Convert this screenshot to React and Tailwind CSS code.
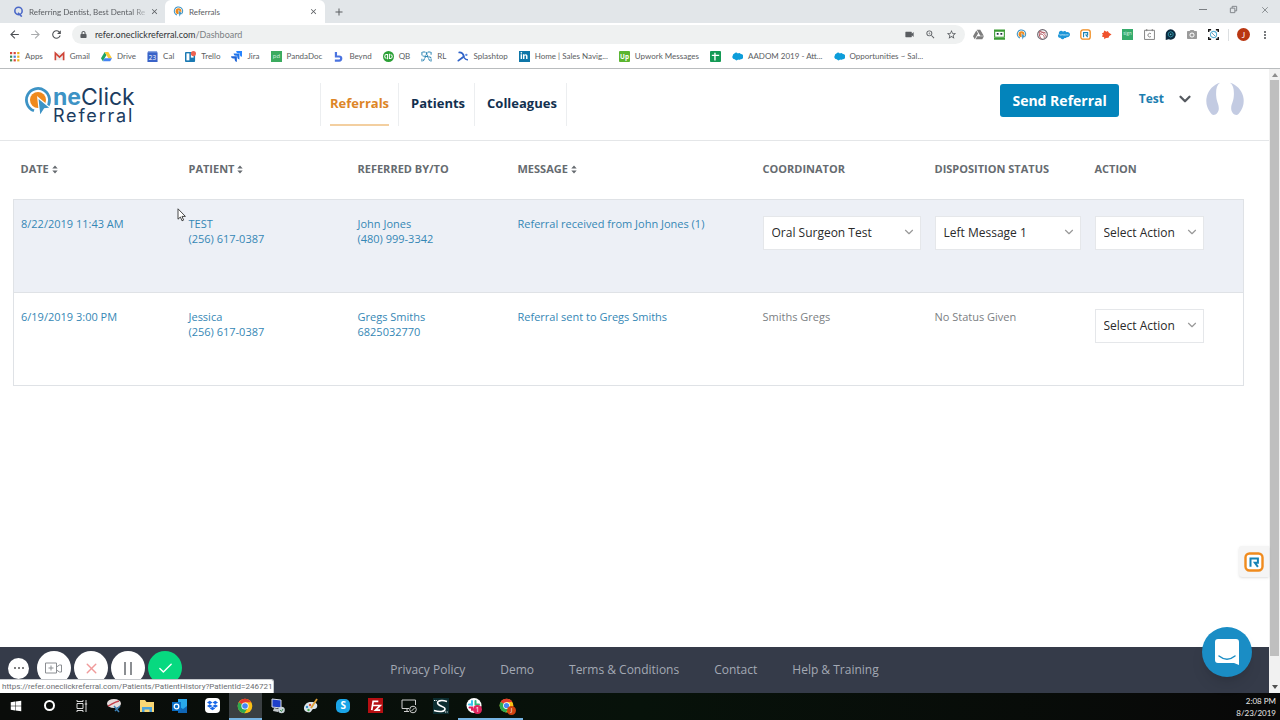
import React, { useState } from 'react';
import { FaDropbox, FaLinkedinIn, FaSalesforce, FaSkype, FaWindows, FaLock, FaGoogleDrive } from 'react-icons/fa';
import { MdArrowBack, MdArrowForward, MdRefresh, MdVideocam, MdStarBorder, MdMoreVert, MdClose, MdZoomIn, MdAdd, MdPhotoCamera } from 'react-icons/md';
import { ChevronDown, X, Check } from 'lucide-react';

// ================= SMALL LOGOS =================

function ClickLogo({ className }) {
  return (
    <svg viewBox="0 0 28 30" className={className}>
      <path d="M10 24.800A11.500 11.500 0 1 1 22.500 21.700" fill="none" stroke="#3d93c5" strokeWidth="2.800" />
      <circle cx="14" cy="14" r="8" fill="#ef8a1d" />
      <path d="M13.800 11.500 26.500 22l-6 .8L15.800 30z" fill="#3d93c5" stroke="#fff" strokeWidth="1.200" />
    </svg>
  );
}

function ChromeLogo({ className }) {
  return (
    <svg viewBox="0 0 24 24" className={className}>
      <circle cx="12" cy="12" r="11" fill="#fbc116" />
      <path d="M12 12 2.5 6.5A11 11 0 0 1 21.5 6.5H12z" fill="#e33b2e" />
      <path d="M2.5 6.5A11 11 0 0 0 11 23l5.5-8.5L12 12z" fill="#2da94f" />
      <circle cx="12" cy="12" r="5.4" fill="#fff" />
      <circle cx="12" cy="12" r="4.2" fill="#4486f4" />
    </svg>
  );
}

function RLogo({ className }) {
  return (
    <svg viewBox="0 0 20 20" className={className}>
      <rect x="1.5" y="1.5" width="17" height="17" rx="4" fill="#fff" stroke="#f08b1d" strokeWidth="2.4" />
      <path d="M6.500 14.800V6.600h7.400v4.200h-3l3 4" fill="none" stroke="#1783b5" strokeWidth="2" />
    </svg>
  );
}

function AppsLogo({ className }) {
  return (
    <svg viewBox="0 0 11 11" className={className}>
      {['#d9453a', '#d9453a', '#e8b21d', '#3b8b4f', '#4b7bd8', '#e8b21d', '#3b8b4f', '#d9453a', '#e8b21d'].map((c, i) => (
        <rect key={i} x={1 + (i % 3) * 3.6} y={1 + Math.floor(i / 3) * 3.6} width="2.2" height="2.2" fill={c} />
      ))}
    </svg>
  );
}

function GmailLogo({ className }) {
  return (
    <svg viewBox="0 0 12 12" className={className}>
      <rect x="1" y="2" width="10" height="8" fill="#eeeeee" />
      <path d="M1.5 10.2V2.4L6 6.6l4.5-4.2v7.8" fill="none" stroke="#cf4336" strokeWidth="1.8" />
    </svg>
  );
}

function DriveLogo({ className }) {
  return (
    <svg viewBox="0 0 12 12" className={className}>
      <path d="M4 1 0 8l2 3.2L6 4.4z" fill="#1fa463" />
      <path d="M4 1h4l4 7H8z" fill="#fcc934" />
      <path d="M4 8h8l-2 3.2H2z" fill="#4485f3" />
    </svg>
  );
}

function CalLogo({ className }) {
  return (
    <svg viewBox="0 0 12 12" className={className}>
      <rect x="1" width="10" height="3" fill="#8ba6e2" />
      <rect x=".5" y="1.5" width="11" height="10.5" fill="#3a63c8" />
      <text x="6" y="9.6" textAnchor="middle" fontSize="7" fill="#fff" fontFamily="Open Sans, sans-serif">23</text>
    </svg>
  );
}

function TrelloLogo({ className }) {
  return (
    <svg viewBox="0 0 12 12" className={className}>
      <rect y="1" width="11" height="11" rx="1" fill="#1a79b3" />
      <rect x="1.6" y="2.6" width="3.2" height="7.6" fill="#fff" />
      <rect x="6.4" y="2.6" width="3" height="4.6" fill="#fff" />
      <circle cx="9.2" cy="2.8" r="2.8" fill="#ec6251" />
    </svg>
  );
}

function JiraLogo({ className }) {
  return (
    <svg viewBox="0 0 12 12" className={className}>
      <path d="M5.6 0H12v6.4A2.6 2.6 0 0 1 9.6 4V2.5H8A2.6 2.6 0 0 1 5.6 0z" fill="#2684ff" />
      <path d="M2.8 2.8h6.4v6.4a2.6 2.6 0 0 1-2.4-2.4V5.3H5.2a2.6 2.6 0 0 1-2.4-2.5z" fill="#2074ea" />
      <path d="M0 5.6h6.4V12A2.6 2.6 0 0 1 4 9.6V8.1H2.4A2.6 2.6 0 0 1 0 5.6z" fill="#2065d6" />
    </svg>
  );
}

function PandaLogo({ className }) {
  return (
    <svg viewBox="0 0 12 12" className={className}>
      <rect width="12" height="12" fill="#3bab5f" />
      <text x="6" y="8" textAnchor="middle" fontSize="6.5" fill="#d8f2e0" fontFamily="Open Sans, sans-serif">pd</text>
    </svg>
  );
}

function BeyndLogo({ className }) {
  return (
    <svg viewBox="0 0 12 12" className={className}>
      <path d="M2 1h2.4v3.8h2.4a3.3 3.3 0 0 1 0 6.8H2V9.4h4.6a1.2 1.2 0 0 0 0-2.4H2z" fill="#4a73e0" />
    </svg>
  );
}

function QbLogo({ className }) {
  return (
    <svg viewBox="0 0 12 12" className={className}>
      <circle cx="6" cy="6" r="6" fill="#2ba036" />
      <path d="M5 9V3.9H3.9a2 2 0 0 0 0 4M7 3v5.1h1.1a2 2 0 0 0 0-4" fill="none" stroke="#fff" strokeWidth="1.1" />
    </svg>
  );
}

function RlLogo({ className }) {
  return (
    <svg viewBox="0 0 12 12" className={className}>
      <path d="M1 4V1h3c4 0 3 10 7 10V8c0-3-10-1-10-4zM11 4V1H8C5 1 5 11 1 11V8" fill="none" stroke="#2f86b4" strokeWidth="1.1" strokeDasharray="3 .6" />
    </svg>
  );
}

function SplashtopLogo({ className }) {
  return (
    <svg viewBox="0 0 12 12" className={className}>
      <path d="M2.5 1.5c3 0 4.5 2 5 4.5l-6 4.5" fill="none" stroke="#2f63c9" strokeWidth="2" strokeLinecap="round" />
      <circle cx="10.2" cy="4.2" r="1.3" fill="#5d8be0" />
      <path d="M8 7.4c1 1.6 2 2 3.4 2.2" fill="none" stroke="#2f63c9" strokeWidth="1.6" strokeLinecap="round" />
    </svg>
  );
}

function LinkedinLogo({ className }) {
  return (
    <span className={`${className} flex items-center justify-center bg-[#0e76a8]`}>
      <FaLinkedinIn size={8} className="text-white" />
    </span>
  );
}

function UpworkLogo({ className }) {
  return (
    <svg viewBox="0 0 12 12" className={className}>
      <rect width="12" height="12" rx="1" fill="#5bb52f" />
      <text x="6" y="8.2" textAnchor="middle" fontSize="7" fontWeight="700" fill="#fff" fontFamily="Open Sans, sans-serif">Up</text>
    </svg>
  );
}

function SheetLogo({ className }) {
  return (
    <svg viewBox="0 0 12 12" className={className}>
      <rect width="12" height="12" rx="1" fill="#149a55" />
      <path d="M2 4.8h8M5.4 2v8.4" stroke="#fff" strokeWidth="1.5" />
    </svg>
  );
}

function CloudLogo({ className }) {
  return (
    <svg viewBox="0 0 12 12" className={className}>
      <path d="M2.600 2.800a2.600 2.600 0 0 1 3.800-.2 2.400 2.400 0 0 1 3.200.8A2.800 2.800 0 0 1 9.400 9a2.600 2.600 0 0 1-2.600.4 2.600 2.600 0 0 1-3.800-.4A2.500 2.500 0 0 1 .9 5a2.300 2.300 0 0 1 1.700-2.200z" fill="#0d9dda" />
    </svg>
  );
}

function QTabLogo({ className }) {
  return (
    <svg viewBox="0 0 12 12" className={className}>
      <circle cx="6" cy="5.4" r="4" fill="none" stroke="#4b68c8" strokeWidth="1.7" />
      <path d="M5.4 7.4 9.6 11.6" stroke="#4b68c8" strokeWidth="1.7" />
    </svg>
  );
}

// ================= BROWSER =================

const BOOKMARKS = [
  { name: 'Apps', Icon: AppsLogo },
  { name: 'Gmail', Icon: GmailLogo },
  { name: 'Drive', Icon: DriveLogo },
  { name: 'Cal', Icon: CalLogo },
  { name: 'Trello', Icon: TrelloLogo },
  { name: 'Jira', Icon: JiraLogo },
  { name: 'PandaDoc', Icon: PandaLogo },
  { name: 'Beynd', Icon: BeyndLogo },
  { name: 'QB', Icon: QbLogo },
  { name: 'RL', Icon: RlLogo },
  { name: 'Splashtop', Icon: SplashtopLogo },
  { name: 'Home | Sales Navig...', Icon: LinkedinLogo },
  { name: 'Upwork Messages', Icon: UpworkLogo },
  { name: '', label: 'Sheets', Icon: SheetLogo },
  { name: 'AADOM 2019 - Att...', Icon: CloudLogo },
  { name: 'Opportunities ~ Sal...', Icon: CloudLogo },
];

const EXTENSIONS = [
  { name: 'Drive', icon: <FaGoogleDrive size={11} className="text-[#7d7d7d]" /> },
  {
    name: 'RoboForm',
    icon: (
      <svg viewBox="0 0 12 12" className="size-[11px]">
        <path d="M0 1.4h12M0 10.8h12" stroke="#3b9b35" strokeWidth="1.8" />
        <rect x=".7" y="2.4" width="10.6" height="6.6" fill="#fff" stroke="#3b9b35" strokeWidth="1.2" />
        <path d="M3 5.4h2M7 5.4h2" stroke="#234" strokeWidth="2" />
      </svg>
    ),
  },
  { name: 'OneClick', icon: <ClickLogo className="size-[11px]" /> },
  {
    name: 'Loom',
    icon: (
      <svg viewBox="0 0 12 12" className="size-[11px]">
        <circle cx="6" cy="6" r="5.3" fill="none" stroke="#6d6770" strokeWidth="1.2" />
        <path d="M2 3.500c3-2 6 1 8 5M2.500 8c1-5 5-5 7-3.500M5 10.600C2 8 2 4 4 2M4 6c2-1 4 1 4 4" fill="none" stroke="#b0525c" strokeWidth="1" />
      </svg>
    ),
  },
  { name: 'Salesforce', icon: <FaSalesforce size={12} className="text-[#1c96d8]" /> },
  { name: 'Referral', icon: <RLogo className="size-[11px]" /> },
  {
    name: 'Splat',
    icon: (
      <svg viewBox="0 0 12 12" className="size-[11px]">
        <path d="M1 4.500 2.800 4.200l.8-2.600L6 3l1.400-.8 1.200 1.800L11.500 6 9 7.600 8.200 9.600l-2.800.2-1.800 1.400-.2-2.200L1 8.200 2 6.400z" fill="#f0532d" />
      </svg>
    ),
  },
  {
    name: 'Sign',
    icon: (
      <svg viewBox="0 0 12 12" className="size-[11px]">
        <rect width="12" height="12" fill="#35ab6c" />
        <text x="6" y="6.4" textAnchor="middle" fontSize="5" fill="#d6f3e2" fontFamily="Open Sans, sans-serif">sign</text>
      </svg>
    ),
  },
  {
    name: 'Calendar',
    icon: (
      <svg viewBox="0 0 12 12" className="size-[11px]">
        <path d="M.6 1.4h10.8v10H.6zM3 0v2.4M9 0v2.4" fill="none" stroke="#7c7c7c" strokeWidth="1" />
        <path d="M7.6 5.2a2 2 0 1 0 0 3" fill="none" stroke="#7c7c7c" strokeWidth="1" />
      </svg>
    ),
  },
  {
    name: 'Ghost',
    icon: (
      <svg viewBox="0 0 12 12" className="size-[11px]">
        <path d="M6 .4a5.6 5.6 0 1 1-2 10.8L.8 12V6A5.4 5.4 0 0 1 6 .4z" fill="#0c2b40" />
        <path d="m6.2 2.8 2.6 1.5v3L6.2 8.8 3.6 7.3v-3z" fill="none" stroke="#2f95a8" strokeWidth="1" />
        <circle cx="6.2" cy="5.8" r=".9" fill="#5cc3cf" />
      </svg>
    ),
  },
  { name: 'Camera', icon: <MdPhotoCamera size={12} className="text-[#9b9b9b]" /> },
  {
    name: 'Scan',
    icon: (
      <svg viewBox="0 0 12 12" className="size-[11px]">
        <path d="M.8 3.4V.8h2.6M8.6.8h2.6v2.6M11.2 8.6v2.6H8.6M3.4 11.2H.8V8.6" fill="none" stroke="#111" strokeWidth="1.5" />
        <circle cx="6" cy="6" r="3.4" fill="none" stroke="#5cb4d8" strokeWidth="1.2" />
        <path d="m4 4 4 4" stroke="#6f93a8" strokeWidth="1" />
      </svg>
    ),
  },
];

function BrowserTop() {
  return (
    <div className="shrink-0 border-b border-[#b9bcbe] bg-white font-['Lato','Open_Sans',sans-serif] text-[#5a5d61]">
      {/* Tabs */}
      <div className="flex h-[23px] items-stretch bg-[#e2e6e9] text-[8px]">
        <div className="flex w-[165px] items-center pr-[6px] pl-[13px]">
          <QTabLogo className="size-[11px] shrink-0" />
          <span className="ml-[5px] flex-1 mask-r-from-85% whitespace-nowrap">Referring Dentist, Best Dental Re</span>
          <button type="button" aria-label="Close tab"><MdClose size={9} /></button>
        </div>
        <div className="flex w-[160px] items-center rounded-t-md bg-white pr-[7px] pl-2">
          <ClickLogo className="size-[11px] shrink-0" />
          <span className="ml-[5px] flex-1">Referrals</span>
          <button type="button" aria-label="Close tab"><MdClose size={9} /></button>
        </div>
        <button type="button" aria-label="New tab" className="px-2"><MdAdd size={12} /></button>
        <div className="ml-auto flex items-center gap-[22px] pr-[10px] pb-1 text-[#7b7f83]">
          <button type="button" aria-label="Minimize" className="h-px w-2 bg-current" />
          <button type="button" aria-label="Restore">
            <svg viewBox="0 0 10 10" className="size-[9px]"><path d="M1.5 3.5h5v5h-5zM3.5 3.5v-2h5v5h-2" fill="none" stroke="currentColor" /></svg>
          </button>
          <button type="button" aria-label="Close"><X size={10} strokeWidth={2} /></button>
        </div>
      </div>

      {/* Address bar */}
      <div className="flex h-[23px] items-center pl-2">
        <div className="flex gap-2 pr-[9px]">
          <button type="button" aria-label="Back" className="text-[#4d5054]"><MdArrowBack size={13} /></button>
          <button type="button" aria-label="Forward" className="text-[#a9abad]"><MdArrowForward size={13} /></button>
          <button type="button" aria-label="Reload" className="text-[#4d5054]"><MdRefresh size={13} /></button>
        </div>
        <div className="flex h-[19px] flex-1 items-center rounded-full bg-[#eff1f1] px-2 text-[9px]">
          <FaLock size={7} className="text-[#5a5d61]" />
          <div className="ml-2 flex-1">
            <span className="text-[#303336]">refer.oneclickreferral.com</span><span className="text-[#7b7f83]">/Dashboard</span>
          </div>
          <div className="flex gap-[10px]">
            <MdVideocam size={11} />
            <MdZoomIn size={11} />
            <MdStarBorder size={11} />
          </div>
        </div>
        <div className="flex items-center pl-[3px]">
          <div className="flex w-[256px]">
            {EXTENSIONS.map(ext => (
              <button key={ext.name} type="button" aria-label={ext.name} className="flex flex-1 justify-center">{ext.icon}</button>
            ))}
          </div>
          <span className="ml-1 h-3 w-px bg-[#dcdfe1]" />
          <span className="ml-2 flex size-[13px] items-center justify-center rounded-full bg-[#b93712] text-[8px] text-white">J</span>
          <button type="button" aria-label="Menu" className="mx-[9px]"><MdMoreVert size={12} /></button>
        </div>
      </div>

      {/* Bookmarks */}
      <div className="flex h-[22px] items-center gap-[11px] pb-[2px] pl-[9px] text-[8px] whitespace-nowrap">
        {BOOKMARKS.map(({ name, label, Icon }) => (
          <a key={name || label} href="#" aria-label={label} className="flex items-center gap-[5px]">
            <Icon className="size-[11px] shrink-0" />
            {name}
          </a>
        ))}
      </div>
    </div>
  );
}

// ================= PAGE =================

function Header() {
  return (
    <header className="flex h-[72px] shrink-0 items-center border-b border-[#e4e6e8] pr-[25px] pl-6">
      <a href="#" className="flex w-[296px] items-start text-[#1b3c5f]">
        <ClickLogo className="h-[30px] w-[28px]" />
        <span className="ml-px flex flex-col font-['Inter']">
          <span className="text-[23px] leading-[22px]"><b className="text-[#3d93c5]">ne</b>Click</span>
          <span className="text-[18px] leading-4 tracking-widest">Referral</span>
        </span>
      </a>
      <nav className="flex border-l border-[#eceef0] text-[13px] font-bold text-[#12304f]">
        <a href="#" className="border-r border-[#eceef0] px-[9px] text-[#dd8527]">
          <span className="block border-b-2 border-[#f3cfa0] pt-[10px] pb-[11px] leading-5">Referrals</span>
        </a>
        <a href="#" className="border-r border-[#eceef0] pt-[10px] pr-[9px] pl-3 leading-5">Patients</a>
        <a href="#" className="border-r border-[#eceef0] pt-[10px] pr-[9px] pl-3 leading-5">Colleagues</a>
      </nav>
      <div className="ml-auto flex items-center pb-2">
        <button type="button" className="h-[33px] rounded-[3px] bg-[#0384bb] px-3 text-[14px] font-bold text-white">Send Referral</button>
        <button type="button" className="ml-5 flex items-center gap-3 pb-1 text-[12px] font-bold text-[#1c7eb0]">
          Test
          <ChevronDown size={18} strokeWidth={3} className="text-[#555a60]" />
        </button>
        <svg viewBox="0 0 38 38" className="ml-3 size-[38px]">
          <path d="M14 .7A19 19 0 0 0 6 32.500C9 34 12.500 31 12.800 27 13 22 10.500 20 10.200 14 9.800 8 10.500 3 14 .7zM24 .7A19 19 0 0 1 32 32.500C29 34 25.500 31 25.200 27 25 22 27.500 20 27.800 14 28.200 8 27.500 3 24 .7z" fill="#c3cbe2" />
        </svg>
      </div>
    </header>
  );
}

function SortIcon() {
  return (
    <svg viewBox="0 0 6 10" className="mb-[2px] ml-[3px] inline-block h-[9px] w-[6px]">
      <path d="M0 4 3 .6 6 4zM0 6l3 3.400L6 6z" fill="#666b70" />
    </svg>
  );
}

function Dropdown({ label, value, options, className }) {
  const [selected, setSelected] = useState(value);
  return (
    <div className={`relative ${className}`}>
      <select
        aria-label={label}
        value={selected}
        onChange={(e) => setSelected(e.target.value)}
        className="h-[34px] w-full appearance-none border border-[#e5e7ea] bg-white pl-2 text-[12px] text-[#2a2a2a] outline-none"
      >
        {options.map(o => <option key={o}>{o}</option>)}
      </select>
      <ChevronDown size={14} className="pointer-events-none absolute top-[9px] right-[5px] text-[#999]" />
    </div>
  );
}

const COLUMNS = [
  { title: 'DATE', sort: true },
  { title: 'PATIENT', sort: true },
  { title: 'REFERRED BY/TO' },
  { title: 'MESSAGE', sort: true },
  { title: 'COORDINATOR' },
  { title: 'DISPOSITION STATUS' },
  { title: 'ACTION' },
];

const REFERRALS = [
  {
    date: '8/22/2019 11:43 AM',
    patient: ['TEST', '(256) 617-0387'],
    referred: ['John Jones', '(480) 999-3342'],
    message: 'Referral received from John Jones (1)',
    coordinator: 'Oral Surgeon Test',
    status: 'Left Message 1',
    editable: true,
  },
  {
    date: '6/19/2019 3:00 PM',
    patient: ['Jessica', '(256) 617-0387'],
    referred: ['Gregs Smiths', '6825032770'],
    message: 'Referral sent to Gregs Smiths',
    coordinator: 'Smiths Gregs',
    status: 'No Status Given',
    editable: false,
  },
];

function ReferralTable() {
  return (
    <div className="pr-[26px] pl-[13px]">
      <table className="w-full table-fixed border-collapse text-[11px] leading-[15px]">
        <colgroup>
          <col className="w-[168px]" />
          <col className="w-[169px]" />
          <col className="w-[160px]" />
          <col className="w-[245px]" />
          <col className="w-[172px]" />
          <col className="w-[160px]" />
          <col className="w-[156px]" />
        </colgroup>
        <thead>
          <tr className="h-[58px] text-left text-[#666b70]">
            {COLUMNS.map(c => (
              <th key={c.title} className="pb-[2px] pl-[7px] font-bold whitespace-nowrap">
                {c.title}
                {c.sort && <SortIcon />}
              </th>
            ))}
          </tr>
        </thead>
        <tbody>
          {REFERRALS.map(r => (
            <tr key={r.date} className={`h-[93px] border border-[#dfe2e6] align-top text-[#3587b5] ${r.editable ? 'bg-[#edf0f6]' : 'bg-white'}`}>
              <td className="pt-4 pl-[7px]"><a href="#">{r.date}</a></td>
              <td className="pt-4 pl-[7px]"><a href="#">{r.patient[0]}<br />{r.patient[1]}</a></td>
              <td className="pt-4 pl-[7px]"><a href="#">{r.referred[0]}<br />{r.referred[1]}</a></td>
              <td className="pt-4 pl-[7px]"><a href="#">{r.message}</a></td>
              <td className="pt-4 pl-[7px] text-[#7b8083]">
                {r.editable
                  ? <Dropdown label="Coordinator" value={r.coordinator} options={[r.coordinator]} className="w-[158px]" />
                  : r.coordinator}
              </td>
              <td className="pt-4 pl-[7px] text-[#7b8083]">
                {r.editable
                  ? <Dropdown label="Disposition status" value={r.status} options={[r.status]} className="w-[146px]" />
                  : r.status}
              </td>
              <td className="pt-4 pl-[7px]">
                <Dropdown label="Action" value="Select Action" options={['Select Action']} className="w-[109px]" />
              </td>
            </tr>
          ))}
        </tbody>
      </table>
    </div>
  );
}

function Footer() {
  return (
    <footer className="flex h-[46px] shrink-0 items-center justify-center gap-[35px] bg-[#353b49] text-[12px] text-[#a3a9b4]">
      {['Privacy Policy', 'Demo', 'Terms & Conditions', 'Contact', 'Help & Training'].map(t => (
        <a key={t} href="#">{t}</a>
      ))}
    </footer>
  );
}

function Scrollbar() {
  return (
    <div className="flex w-[11px] shrink-0 flex-col items-center bg-[#f1f1f1] py-1">
      <svg viewBox="0 0 6 4" className="h-1 w-[6px]"><path d="M0 4 3 0l3 4z" fill="#8d8d8d" /></svg>
      <div className="mt-[3px] w-[9px] grow-[20] bg-[#bfbfbf]" />
      <div className="grow" />
      <svg viewBox="0 0 6 4" className="h-1 w-[6px]"><path d="M0 0h6L3 4z" fill="#505050" /></svg>
    </div>
  );
}

// Screen recorder controls, bottom left of the page
function RecorderControls() {
  return (
    <div className="absolute bottom-2 left-2 flex items-center">
      <button type="button" aria-label="More" className="mr-2 flex size-[21px] items-center justify-center gap-[2px] rounded-full bg-white">
        <span className="size-[2px] rounded-full bg-[#555]" />
        <span className="size-[2px] rounded-full bg-[#555]" />
        <span className="size-[2px] rounded-full bg-[#555]" />
      </button>
      <div className="flex gap-[3px]">
        <button type="button" aria-label="Camera" className="flex size-[34px] items-center justify-center rounded-full bg-white">
          <svg viewBox="0 0 18 12" className="h-3 w-[18px]" fill="none" stroke="#8b8e92">
            <path d="M.5 1h11v10H.5zM11.500 5l3-2h2v7h-2l-3-2M6 3.500v5M3.500 6h5" />
          </svg>
        </button>
        <button type="button" aria-label="Cancel" className="flex size-[34px] items-center justify-center rounded-full bg-white">
          <X size={17} strokeWidth={2} className="text-[#f09a9a]" />
        </button>
        <button type="button" aria-label="Pause" className="flex size-[34px] items-center justify-center gap-1 rounded-full bg-white">
          <span className="h-[13px] w-[2px] bg-[#8b8e92]" />
          <span className="h-[13px] w-[2px] bg-[#8b8e92]" />
        </button>
        <button type="button" aria-label="Finish" className="flex size-[34px] items-center justify-center rounded-full bg-[#07d980]">
          <Check size={17} strokeWidth={2} className="text-white" />
        </button>
      </div>
    </div>
  );
}

function Overlays() {
  return (
    <>
      <RecorderControls />
      <div className="absolute bottom-0 left-0 rounded-tr-[3px] border-t border-r border-[#c5c8cc] bg-white pr-px pl-[2px] font-['Roboto'] text-[8px] leading-[13px] text-[#6b6e72]">
        https://refer.oneclickreferral.com/Patients/PatientHistory?PatientId=246721
      </div>
      <button type="button" aria-label="Open widget" className="absolute right-0 bottom-[116px] flex h-[31px] w-[30px] items-center justify-center rounded-l-[3px] bg-[#f5f5f5] shadow">
        <RLogo className="size-5" />
      </button>
      <button type="button" aria-label="Chat" className="absolute right-[17px] bottom-4 flex size-[50px] items-center justify-center rounded-full bg-[#1a8dc5] shadow-lg">
        <svg viewBox="0 0 26 28" className="h-7 w-[26px]">
          <path d="M4 1h18a3 3 0 0 1 3 3v23l-5-2H4a3 3 0 0 1-3-3V4a3 3 0 0 1 3-3z" fill="#fff" />
          <path d="M5 18c5 4 11 4 16 0" fill="none" stroke="#1a8dc5" strokeWidth="1.500" strokeLinecap="round" />
        </svg>
      </button>
      <svg viewBox="0 0 10 14" className="absolute top-[139px] left-[177px] h-[14px] w-[10px]">
        <path d="M1 .8v10.400l2.400-2.200 1.600 3.800 1.600-.7L5 8.400h3.400z" fill="#fff" stroke="#333" strokeWidth=".9" />
      </svg>
    </>
  );
}

// ================= TASKBAR =================

const TASKS = [
  { name: 'Start', icon: <FaWindows size={12} className="text-white" /> },
  { name: 'Cortana', icon: <span className="size-[11px] rounded-full border-2 border-white" /> },
  {
    name: 'Task view',
    icon: (
      <svg viewBox="0 0 12 12" className="size-3" fill="none" stroke="#dcdcdc">
        <path d="M1 3.500h6v5H1zM1 0v1.500h6V0M1 12v-1.500h6V12M10 0v12M8.800 4h2.400" />
      </svg>
    ),
  },
  {
    name: 'Snip',
    icon: (
      <svg viewBox="0 0 16 16" className="size-4">
        <ellipse cx="8" cy="5.500" rx="7" ry="4.500" fill="#e6dede" />
        <path d="M2 8c3-1 6-4 11-5" stroke="#c4404c" strokeWidth="1.500" fill="none" />
        <path d="m8 8 5 6M14 8l-5 5" stroke="#3e83b8" strokeWidth="1.500" />
      </svg>
    ),
  },
  {
    name: 'Explorer',
    icon: (
      <svg viewBox="0 0 16 14" className="h-[14px] w-4">
        <path d="M1 1h5l1.500 2H15v10H1z" fill="#f8d775" />
        <path d="M3 13V8h10v5h-2.500v-2.500h-5V13z" fill="#4aa3dc" />
      </svg>
    ),
  },
  {
    name: 'Outlook',
    icon: (
      <svg viewBox="0 0 16 16" className="size-4">
        <rect x="6" y="1" width="9" height="14" fill="#28a8ea" />
        <path d="m6 8 5 3 4-3v7H6z" fill="#1066b5" />
        <rect y="4" width="9" height="9" fill="#0a6ec4" />
        <circle cx="4.500" cy="8.500" r="2.300" fill="none" stroke="#fff" strokeWidth="1.300" />
      </svg>
    ),
  },
  {
    name: 'Dropbox',
    icon: <span className="flex size-[15px] items-center justify-center rounded-sm bg-white"><FaDropbox size={11} className="text-[#1767e8]" /></span>,
  },
  { name: 'Chrome', icon: <ChromeLogo className="size-4" />, active: true },
  {
    name: 'Remote',
    icon: (
      <svg viewBox="0 0 16 16" className="size-4">
        <path d="m2 1 9 1v8l-9-1z" fill="#1f3fc9" stroke="#d8dde4" />
        <path d="m4 10 5 1-1 3-5-1z" fill="#c4c8cc" />
        <circle cx="11.500" cy="12" r="3.300" fill="#c9d3d9" />
        <path d="m10 12 1.500 1.500L13 11" stroke="#3d8e4e" fill="none" />
      </svg>
    ),
  },
  {
    name: 'Paint',
    icon: (
      <svg viewBox="0 0 16 16" className="size-4">
        <path d="M8 4c5 0 7 2 6 5s-4 1-5 3-2 3-5 2-4-4-2-7 4-3 6-3z" fill="#dbe4ea" />
        <circle cx="4" cy="9" r="1.200" fill="#3d8ec9" />
        <circle cx="7" cy="7" r="1.200" fill="#d8503b" />
        <circle cx="5.500" cy="12" r="1.200" fill="#48a84f" />
        <path d="M8 10 14 1" stroke="#e0a13a" strokeWidth="1.800" />
      </svg>
    ),
  },
  {
    name: 'Skype',
    icon: (
      <span className="flex size-[14px] items-center justify-center rounded-[5px] bg-[#1aa5e8] text-[10px] font-bold text-white">S</span>
    ),
  },
  {
    name: 'FileZilla',
    icon: (
      <svg viewBox="0 0 16 16" className="size-[15px]">
        <rect width="16" height="16" fill="#b50f12" />
        <path d="M4 13 5.500 3.500H11M4.800 8H9M8.500 8h4.500l-5 5h5" fill="none" stroke="#fff" strokeWidth="1.800" />
      </svg>
    ),
  },
  {
    name: 'Display',
    icon: (
      <svg viewBox="0 0 16 16" className="size-4" fill="none" stroke="#cfcfcf">
        <path d="M8 10.500H1V2h13.500v5M3 13.500h5M6 10.500v3" />
        <circle cx="12" cy="11.500" r="3.300" />
        <path d="m10.500 13 3-3" />
      </svg>
    ),
  },
  {
    name: 'S',
    icon: (
      <svg viewBox="0 0 16 16" className="size-4">
        <rect width="16" height="16" fill="#0c2d30" />
        <path d="M14 3.500C8 1.500 3 3 5 6s7 2 7 5-6 3-11 1.500" fill="none" stroke="#fff" strokeWidth="1.600" />
        <path d="M1 2.500h3M12 14h3" stroke="#fff" strokeDasharray="1 .7" />
      </svg>
    ),
  },
  {
    name: 'Slack',
    open: true,
    icon: (
      <svg viewBox="0 0 16 16" className="size-4">
        <circle cx="8" cy="7.500" r="7.500" fill="#fff" />
        <path d="M6 3v4M3 6.500h2" stroke="#36c5f0" strokeWidth="2" strokeLinecap="round" />
        <path d="M9.500 3v3.500H13" stroke="#2eb67d" strokeWidth="2" strokeLinecap="round" fill="none" />
        <path d="M3.500 9.500H6V12" stroke="#e01e5a" strokeWidth="2" strokeLinecap="round" fill="none" />
        <circle cx="11.500" cy="11.500" r="4.500" fill="#e0245e" />
        <text x="11.500" y="14" textAnchor="middle" fontSize="7" fill="#fff" fontFamily="Open Sans, sans-serif">1</text>
      </svg>
    ),
  },
  {
    name: 'Chrome profile',
    open: true,
    icon: (
      <span className="relative">
        <ChromeLogo className="size-[15px]" />
        <span className="absolute -right-[2px] -bottom-[2px] flex size-[9px] items-center justify-center rounded-full bg-[#d0430f] text-[6px] text-white">J</span>
      </span>
    ),
  },
];

function Taskbar() {
  return (
    <div className="flex h-[27px] shrink-0 items-stretch justify-between bg-linear-to-r from-[#0a0c0a] via-[#07120a] to-[#080808]">
      <div className="flex w-[523px]">
        {TASKS.map(t => (
          <button
            key={t.name}
            type="button"
            aria-label={t.name}
            className={`flex flex-1 items-center justify-center border-b-2 ${t.active ? 'border-[#76b4e3] bg-[#3a3f42]' : t.open ? 'border-[#76b4e3]' : 'border-transparent'}`}
          >
            {t.icon}
          </button>
        ))}
      </div>
      <div className="flex flex-col justify-center pr-1 text-right font-['Lato'] text-[8px] leading-3 text-[#e8e8e8]">
        <span>2:08 PM</span>
        <span>8/23/2019</span>
      </div>
    </div>
  );
}

export default function App() {
  return (
    <div className="flex min-h-screen flex-col bg-white font-['Open_Sans','Noto_Sans',sans-serif]">
      <BrowserTop />
      <div className="flex flex-1">
        <div className="relative flex min-w-0 flex-1 flex-col">
          <Header />
          <main className="flex-1">
            <ReferralTable />
          </main>
          <Footer />
          <Overlays />
        </div>
        <Scrollbar />
      </div>
      <Taskbar />
    </div>
  );
}
